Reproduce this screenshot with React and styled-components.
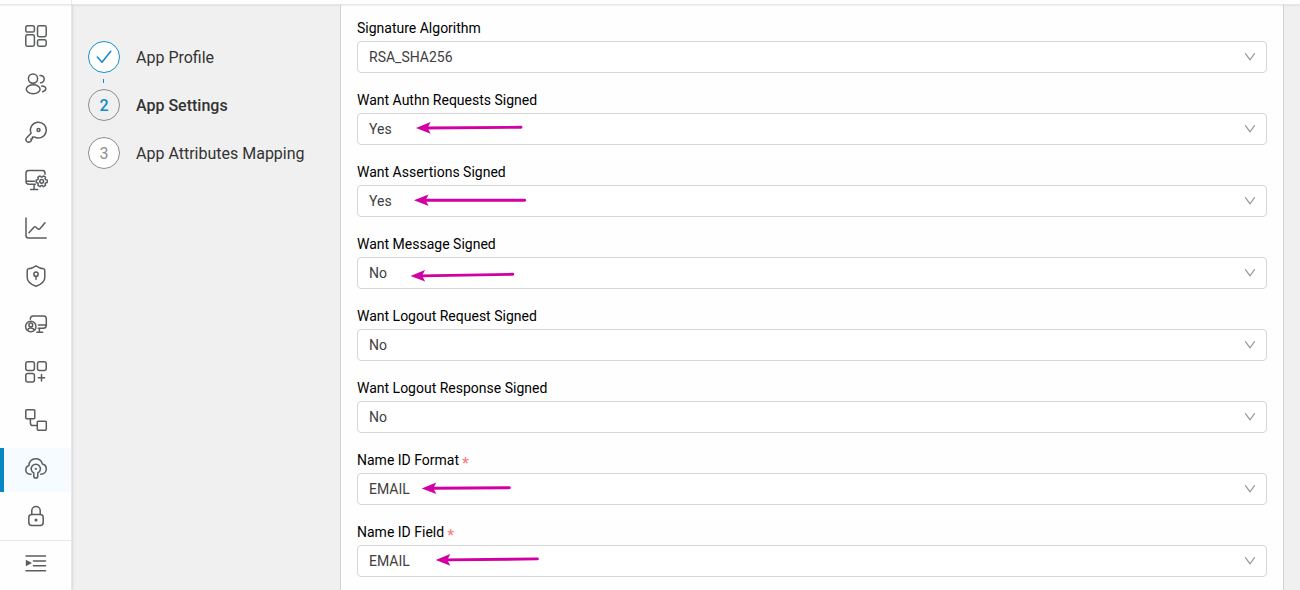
import React from 'react';
import styled, { createGlobalStyle, css } from 'styled-components';

const GlobalStyle = createGlobalStyle`
  *, *::before, *::after { box-sizing: border-box; }
  body {
    margin: 0;
    overflow: hidden;
    background: #f0f0f0;
    font-family: Roboto, "Liberation Sans", sans-serif;
    font-size: 14px;
    color: #333;
  }
`;

const Page = styled.div`
  display: flex;
  flex-direction: column;
  height: 590px;
  overflow: hidden;
`;

const TopBar = styled.header`
  flex: none;
  position: relative;
  z-index: 2;
  height: 5px;
  background: #fefefe;
  border-bottom: 1px solid #e6e6e6;
  box-shadow: 0 1px 2px rgba(0, 0, 0, 0.06);

  &::before {
    content: '';
    display: block;
    width: 72px;
    height: 4px;
    border-right: 1px solid #ececec;
  }
`;

const Body = styled.div`
  flex: 1;
  min-height: 0;
  display: flex;
`;

const Sidebar = styled.nav`
  flex: none;
  width: 72px;
  display: flex;
  flex-direction: column;
  background: #fefefe;
  border-right: 1px solid #e9e9e9;
  box-shadow: 1px 0 2px rgba(0, 0, 0, 0.1);
  padding-top: 11px;
`;

const NavItem = styled.a`
  flex: none;
  display: flex;
  align-items: center;
  justify-content: center;
  height: 44px;
  margin-bottom: 4px;
  padding: 0 3px 4px 0;
  border-left: 4px solid transparent;
  color: #5a5c5e;
  ${(p) => p.$active && css`
    background: #f5fbff;
    border-left-color: #0788c3;
  `}

  &:last-of-type { margin-bottom: 0; }
`;

const NavFooter = styled.div`
  flex: 1;
  border-top: 1px solid #e8e8e8;
  display: flex;
  justify-content: center;
  padding: 11px 0 0 1px;
  color: #5a5c5e;
`;

const Icon = styled.svg`
  display: block;
  width: 24px;
  height: 24px;
  fill: none;
  stroke: currentColor;
  stroke-width: 1.5;
  stroke-linecap: round;
  stroke-linejoin: round;
`;

const Steps = styled.ol`
  flex: none;
  list-style: none;
  width: 268px;
  margin: 0;
  padding: 36px 0 0 16px;
`;

const Step = styled.li`
  display: grid;
  grid-template-columns: 32px 1fr;
  column-gap: 16px;
  align-items: center;
  height: 32px;
  font-size: 16px;
  line-height: 32px;
  color: #333;
  font-weight: ${(p) => (p.$state === 'current' ? 500 : 400)};
`;

const StepLabel = styled.span`
  line-height: 30px;
  padding-top: 2px;
`;

const markerColors = {
  done: ['#fff', '#1890c8', '#0e8acb'],
  current: ['#f0f0f0', '#8c8c8c', '#0e8acb'],
  waiting: ['#fff', '#8c8c8c', '#8f8f8f'],
};

const Marker = styled.span`
  display: flex;
  align-items: center;
  justify-content: center;
  width: 32px;
  height: 32px;
  border-radius: 50%;
  background: ${(p) => markerColors[p.$state][0]};
  border: 1px solid ${(p) => markerColors[p.$state][1]};
  color: ${(p) => markerColors[p.$state][2]};
  padding-top: ${(p) => (p.$state === 'done' ? 0 : '2px')};
`;

const Connector = styled.li`
  width: 1px;
  height: 4px;
  margin: 6px 15px;
  background: ${(p) => (p.$done ? '#0e8acb' : 'transparent')};
`;

const FormPanel = styled.main`
  flex: none;
  width: 944px;
  padding: 11px 16px 0;
  background: #fefefe;
  border: solid #d4d4d4;
  border-width: 0 1px;
`;

const Field = styled.div`
  height: 72px;
`;

const Label = styled.label`
  display: flex;
  height: 25px;
  line-height: 25px;
  color: #000;
`;

const Required = styled.span`
  margin-left: 3px;
  padding-top: 4px;
  color: #ff7072;
  font-family: "Liberation Sans", sans-serif;
  font-size: 18px;
`;

const Select = styled.div`
  position: relative;
  display: flex;
  align-items: center;
  justify-content: space-between;
  height: 32px;
  padding: 0 10px 0 11px;
  border: 1px solid #d6d6d6;
  border-radius: 4px;
  background: #fff;
  color: #404040;
`;

const Chevron = styled.svg`
  width: 12px;
  height: 12px;
  fill: none;
  stroke: #8c8c8c;
  stroke-width: 1.1;
`;

const Pointer = styled.svg`
  position: absolute;
  left: 0;
  top: 0;
  width: 200px;
  height: 30px;
  overflow: visible;
  pointer-events: none;
  fill: #d000a4;
  stroke: #d000a4;
`;

const gearPath = () => {
  const pts = [];
  for (let i = 0; i < 6; i++) {
    const a = (i * Math.PI) / 3;
    [[-0.4, 4.3], [-0.22, 5.6], [0.22, 5.6], [0.4, 4.3]].forEach(([d, r]) => {
      pts.push(`${(17.7 + r * Math.cos(a + d)).toFixed(2)} ${(13.3 + r * Math.sin(a + d)).toFixed(2)}`);
    });
  }
  return `M${pts.join('L')}Z`;
};

const navIcons = [
  ['dashboard', <>
    <rect x="1.8" y="1.7" width="8.6" height="6.4" rx="1.7" />
    <rect x="1.8" y="10.7" width="8.6" height="11.5" rx="1.7" />
    <rect x="13.5" y="1.7" width="8.7" height="11" rx="1.7" />
    <rect x="13.5" y="15.8" width="8.7" height="6.4" rx="1.7" />
  </>],
  ['users', <>
    <circle cx="9" cy="6.6" r="4.6" />
    <ellipse cx="9.2" cy="17.3" rx="6.9" ry="4.5" />
    <path d="M16 3.4C18.6 3.3 20.2 4.9 20.2 7S18.6 10.8 16.5 10.7" />
    <path d="M17.6 14C20 14.1 21.8 15.2 21.8 16.8S20.4 19.3 18.6 19.7" />
  </>],
  ['key', <>
    <path d="M7.1 13.3A7.9 7.9 0 1 1 10.3 16.9Q9.7 17.4 8.4 17.1Q8.8 19.4 6.9 18.9Q8 20.2 6.6 21.4C5.4 22.4 3.6 22.3 2.6 21.2C1.6 20 1.8 18.5 2.9 17.5Z" />
    <circle cx="14.5" cy="10" r="1.5" />
  </>],
  ['device-settings', <>
    <path d="M21 6.3V5.3Q21 2.6 18.3 2.6H4.7Q2 2.6 2 5.3V13.3Q2 16.3 5 16.3H11.3M2 13.2H10.4M10.1 16.3V21.4M6.7 21.5H13.6" />
    <path d={gearPath()} />
    <circle cx="17.7" cy="13.3" r="1.9" />
  </>],
  ['reports', <>
    <path d="M2 2V19.6Q2 22.1 4.5 22.1H22.2" />
    <path d="M5 16.8L9.9 11.3Q10.9 10.2 12 11.2L13.3 12.5Q14.9 13.9 16.4 12.2L21 6.8" />
  </>],
  ['security', <>
    <path d="M12 1.8Q16 4.5 19.4 4.8Q20.8 5 20.8 6.5V13.5C20.8 18 16.2 20.7 12 22.3C7.8 20.7 3.2 18 3.2 13.5V6.5Q3.2 5 4.6 4.8Q8 4.5 12 1.8Z" />
    <circle cx="12" cy="10.2" r="2.1" />
    <path d="M12 12.5V15.3" />
  </>],
  ['user-device', <>
    <path d="M6.3 7.2Q6.3 4 9.3 4H19.5Q22.3 4 22.3 6.8V13.3Q22.3 16.2 19.5 16.2H14.3M14.5 13.1H22.1M15.4 16.3V20.2M12.8 20.3H18.7" />
    <circle cx="6.8" cy="14.5" r="5.2" />
    <circle cx="6.8" cy="13" r="1.9" />
    <path d="M3.7 18.1Q4.2 16.1 6.8 16.1T9.9 18.1" />
  </>],
  ['apps', <>
    <rect x="1.8" y="1.7" width="8.6" height="8.7" rx="2" />
    <rect x="13.5" y="1.7" width="8.7" height="8.7" rx="2" />
    <rect x="1.8" y="13.4" width="8.6" height="8.6" rx="2" />
    <path d="M17.5 14.5V20.9M14.3 17.7H20.7" />
  </>],
  ['workflow', <>
    <rect x="1.8" y="1.7" width="9" height="9" rx="0.9" />
    <rect x="13.3" y="13.2" width="9" height="9" rx="0.9" />
    <path d="M6.4 10.8V14.9Q6.4 17.5 9 17.5H13.2" />
  </>],
  ['cloud-access', <>
    <path d="M7 18.3H5.9C3.5 18.3 1.8 16.4 1.8 14C1.8 11.8 3.1 10.1 5 9.6C4.6 5.8 7.7 2.7 11.7 2.7C15 2.7 17.6 4.8 18.3 7.9C20.6 8.3 22.3 10.4 22.3 13C22.3 16 20 18.2 16.7 18.3" />
    <path d="M9.8 17A4.6 4.6 0 1 1 13.8 17V20.2Q13.8 22 11.8 22T9.8 20.2Z" />
    <circle cx="11.8" cy="12.9" r="0.4" />
  </>],
  ['lock', <>
    <rect x="4.8" y="10.6" width="14.4" height="10.8" rx="3" />
    <path d="M7.8 10.5V6.8A4.2 4.2 0 0 1 16.2 6.8V10.5" />
    <circle cx="12" cy="16" r="0.8" fill="currentColor" />
  </>],
];

const steps = [
  { label: 'App Profile', state: 'done' },
  { label: 'App Settings', state: 'current' },
  { label: 'App Attributes Mapping', state: 'waiting' },
];

// arrow: [tip x, tip y, tail x, tail y] measured inside the select box
const fields = [
  { label: 'Signature Algorithm', value: 'RSA_SHA256' },
  { label: 'Want Authn Requests Signed', value: 'Yes', arrow: [58, 14, 164.4, 13.3] },
  { label: 'Want Assertions Signed', value: 'Yes', arrow: [56, 14.3, 168, 14.3] },
  { label: 'Want Message Signed', value: 'No', arrow: [52.5, 18, 156.2, 16.3] },
  { label: 'Want Logout Request Signed', value: 'No' },
  { label: 'Want Logout Response Signed', value: 'No' },
  { label: 'Name ID Format', value: 'EMAIL', required: true, arrow: [63.7, 14.4, 152.7, 13.7] },
  { label: 'Name ID Field', value: 'EMAIL', required: true, arrow: [77.7, 14, 180.8, 12.9] },
];

function Arrow({ points: [x1, y1, x2, y2] }) {
  const angle = (Math.atan2(y2 - y1, x2 - x1) * 180) / Math.PI;
  const length = Math.hypot(x2 - x1, y2 - y1);
  return (
    <Pointer>
      <g transform={`translate(${x1} ${y1}) rotate(${angle})`}>
        <path d="M0 0L14.6 -5.8L11.6 0L14.6 5.8Z" stroke="none" />
        <path d={`M10 0H${length - 1.4}`} strokeWidth="2.9" strokeLinecap="round" />
      </g>
    </Pointer>
  );
}

export default function App() {
  return (
    <Page>
      <GlobalStyle />
      <TopBar />
      <Body>
        <Sidebar>
          {navIcons.map(([name, shape]) => (
            <NavItem key={name} $active={name === 'cloud-access'}>
              <Icon viewBox="0 0 24 24">{shape}</Icon>
            </NavItem>
          ))}
          <NavFooter>
            <Icon viewBox="0 0 24 24">
              <path d="M2 4H21.5M9.4 9H21.5M9.4 13.7H21.5M2 18.7H21.5" />
              <path d="M1.8 7.8L8 11L1.8 14.3Z" fill="currentColor" stroke="none" />
            </Icon>
          </NavFooter>
        </Sidebar>
        <Steps>
          {steps.map(({ label, state }, i) => (
            <React.Fragment key={label}>
              <Step $state={state}>
                <Marker $state={state}>
                  {state === 'done' ? (
                    <Icon viewBox="0 0 24 24"><path d="M5.3 12L10 17.2L18.8 6.3" /></Icon>
                  ) : i + 1}
                </Marker>
                <StepLabel>{label}</StepLabel>
              </Step>
              {i < steps.length - 1 && <Connector $done={state === 'done'} />}
            </React.Fragment>
          ))}
        </Steps>
        <FormPanel>
          {fields.map(({ label, value, required, arrow }) => (
            <Field key={label}>
              <Label>
                {label}
                {required && <Required>*</Required>}
              </Label>
              <Select>
                {value}
                <Chevron viewBox="0 0 12 12"><path d="M1.2 2.2L6 8.8L10.8 2.2" /></Chevron>
                {arrow && <Arrow points={arrow} />}
              </Select>
            </Field>
          ))}
        </FormPanel>
      </Body>
    </Page>
  );
}
